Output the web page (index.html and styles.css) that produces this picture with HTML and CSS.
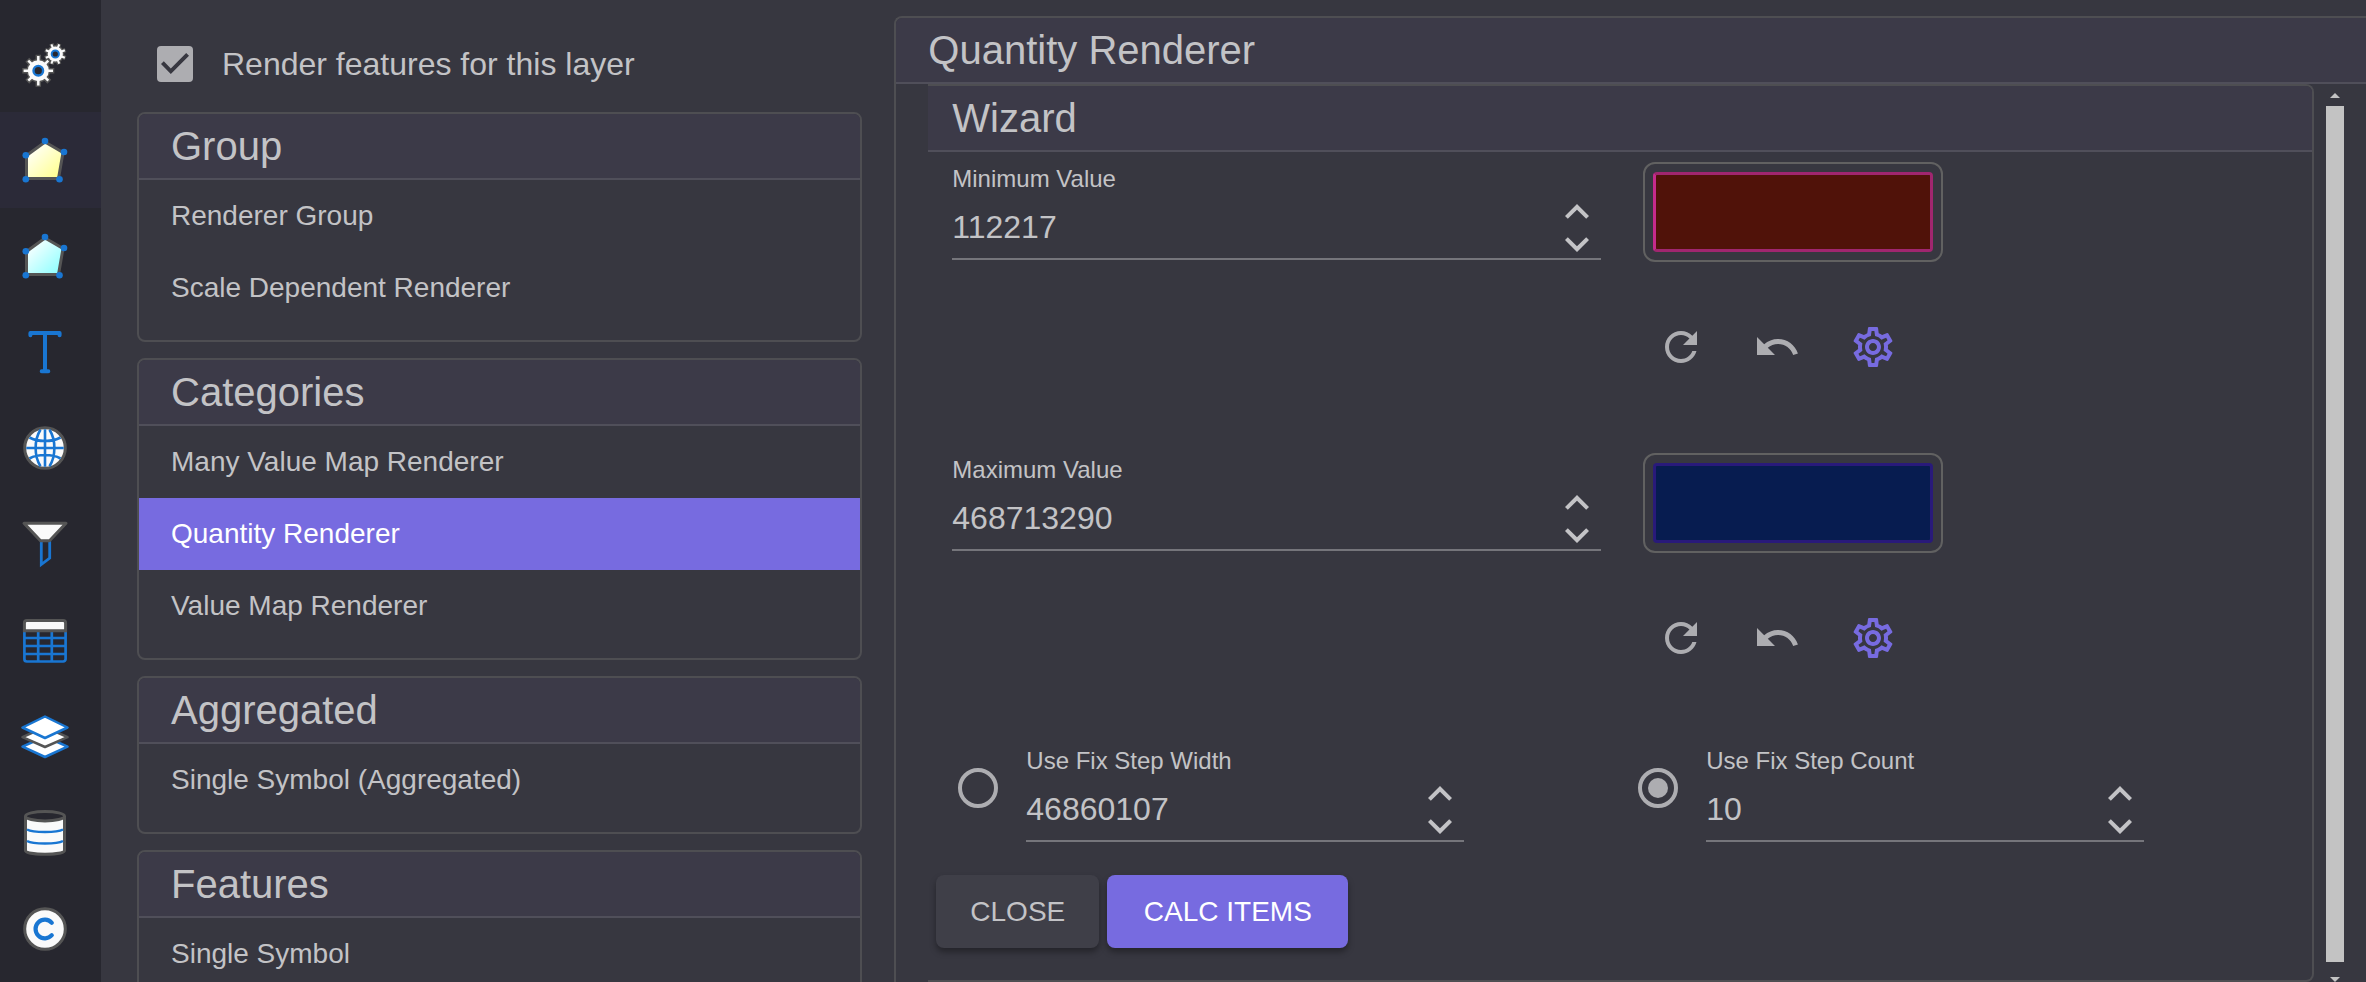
FILE: index.html
```html
<!DOCTYPE html>
<html lang="en">
<head>
<meta charset="utf-8">
<title>Layer rendering</title>
<link rel="stylesheet" href="styles.css">
</head>
<body>
<svg class="sprite" aria-hidden="true">
  <symbol id="i-up" viewBox="4 4 16 16"><path d="M7.41 15.41 12 10.83l4.59 4.58L18 14l-6-6-6 6z"/></symbol>
  <symbol id="i-down" viewBox="4 4 16 16"><path d="M7.41 8.59 12 13.17l4.59-4.58L18 10l-6 6-6-6z"/></symbol>
  <symbol id="i-refresh" viewBox="0 0 24 24"><path d="M17.65 6.35C16.2 4.9 14.21 4 12 4c-4.42 0-7.99 3.58-7.99 8s3.57 8 7.99 8c3.73 0 6.84-2.55 7.73-6h-2.08c-.82 2.33-3.04 4-5.65 4-3.31 0-6-2.69-6-6s2.69-6 6-6c1.66 0 3.14.69 4.22 1.78L13 11h7V4z"/></symbol>
  <symbol id="i-undo" viewBox="0 0 24 24"><path d="M12.5 8c-2.65 0-5.05.99-6.9 2.6L2 7v9h9l-3.62-3.62c1.39-1.16 3.16-1.88 5.12-1.88 3.54 0 6.55 2.31 7.6 5.5l2.37-.78C21.08 11.03 17.15 8 12.5 8z"/></symbol>
  <symbol id="i-gear" viewBox="0 0 24 24"><path d="M19.43 12.98c.04-.32.07-.64.07-.98 0-.34-.03-.66-.07-.98l2.11-1.65c.19-.15.24-.42.12-.64l-2-3.46c-.09-.16-.26-.25-.44-.25-.06 0-.12.01-.17.03l-2.49 1c-.52-.4-1.08-.73-1.69-.98l-.38-2.65C14.46 2.18 14.25 2 14 2h-4c-.25 0-.46.18-.49.42l-.38 2.65c-.61.25-1.17.59-1.69.98l-2.49-1c-.06-.02-.12-.03-.18-.03-.17 0-.34.09-.43.25l-2 3.46c-.13.22-.07.49.12.64l2.11 1.65c-.04.32-.07.65-.07.98 0 .33.03.66.07.98l-2.11 1.65c-.19.15-.24.42-.12.64l2 3.46c.09.16.26.25.44.25.06 0 .12-.01.17-.03l2.49-1c.52.4 1.08.73 1.69.98l.38 2.65c.03.24.24.42.49.42h4c.25 0 .46-.18.49-.42l.38-2.65c.61-.25 1.17-.59 1.69-.98l2.49 1c.06.02.12.03.18.03.17 0 .34-.09.43-.25l2-3.46c.12-.22.07-.49-.12-.64l-2.11-1.65zm-1.98-1.71c.04.31.05.52.05.73 0 .21-.02.43-.05.73l-.14 1.13.89.7 1.08.84-.7 1.21-1.27-.51-1.04-.42-.9.68c-.43.32-.84.56-1.25.73l-1.06.43-.16 1.13-.2 1.35h-1.4l-.19-1.35-.16-1.13-1.06-.43c-.43-.18-.83-.41-1.23-.71l-.91-.7-1.06.43-1.27.51-.7-1.21 1.08-.84.89-.7-.14-1.13c-.03-.31-.05-.54-.05-.74s.02-.43.05-.73l.14-1.13-.89-.7-1.08-.84.7-1.21 1.27.51 1.04.42.9-.68c.43-.32.84-.56 1.25-.73l1.06-.43.16-1.13.2-1.35h1.39l.19 1.35.16 1.13 1.06.43c.43.18.83.41 1.23.71l.91.7 1.06-.43 1.27-.51.7 1.21-1.07.85-.89.7.14 1.13zM12 8c-2.21 0-4 1.79-4 4s1.79 4 4 4 4-1.79 4-4-1.79-4-4-4zm0 6c-1.1 0-2-.9-2-2s.9-2 2-2 2 .9 2 2-.9 2-2 2z"/></symbol>
</svg>

<div class="app">
  <nav class="rail" aria-label="Layer properties">
    <button class="rail-item" aria-label="General">
      <svg viewBox="0 0 48 48">
        <g class="gear-edge"><path stroke-width="5.5" d="M17.3 14.7v32M1.3 30.7h32M6.3 19.7l22 22M28.3 19.7l-22 22"/><circle cx="17.3" cy="30.7" r="11.8"/><path stroke-width="4.5" d="M30.4 3.8l7.8 20.4M38.2 3.8l-7.8 20.4M24 10l20.6 8M24 18l20.6-8"/><circle cx="34.3" cy="14" r="9"/></g>
        <g class="gear-body"><path stroke-width="2.5" d="M17.3 16v29.4M2.6 30.7H32M7.3 20.7l20 20M27.3 20.7l-20 20"/><circle cx="17.3" cy="30.7" r="10.5"/><path stroke-width="2" d="M30.4 4.3l7.8 19.4M38.2 4.3l-7.8 19.4M24.8 10.2l19 7.6M24.8 17.8l19-7.6"/><circle cx="34.3" cy="14" r="7.6"/></g>
        <g class="hub"><circle cx="17.3" cy="30.7" r="4.8" stroke-width="2.4"/><circle cx="34.3" cy="14" r="3.6" stroke-width="2"/></g>
      </svg>
    </button>
    <button class="rail-item is-active" aria-label="Rendering">
      <svg viewBox="0 0 48 48">
        <defs><linearGradient id="warm" x1="0" y1="0" x2="1" y2="1"><stop offset=".1" stop-color="#fff"/><stop offset=".9" stop-color="#ffff91"/></linearGradient></defs>
        <path class="edge" fill="url(#warm)" d="M24 6l18 10.500-4.500 26H5.500V19.500z"/>
        <g class="dots"><circle cx="24" cy="5" r="3.300"/><circle cx="43" cy="16" r="3.300"/><circle cx="38.500" cy="43.300" r="3.300"/><circle cx="4.800" cy="43.300" r="3.300"/><circle cx="4.800" cy="19.200" r="3.300"/></g>
      </svg>
    </button>
    <button class="rail-item" aria-label="Selection rendering">
      <svg viewBox="0 0 48 48">
        <defs><linearGradient id="cool" x1="0" y1="0" x2="1" y2="1"><stop offset=".1" stop-color="#fff"/><stop offset=".9" stop-color="#91ffff"/></linearGradient></defs>
        <path class="edge" fill="url(#cool)" d="M24 6l18 10.500-4.500 26H5.500V19.500z"/>
        <g class="dots"><circle cx="24" cy="5" r="3.300"/><circle cx="43" cy="16" r="3.300"/><circle cx="38.500" cy="43.300" r="3.300"/><circle cx="4.800" cy="43.300" r="3.300"/><circle cx="4.800" cy="19.200" r="3.300"/></g>
      </svg>
    </button>
    <button class="rail-item" aria-label="Labels">
      <svg viewBox="0 0 48 48"><g class="blue-line" stroke-width="4" stroke-linecap="round" stroke-linejoin="round"><path d="M9.400 7.300V4.900h29.200v2.400M20.700 43.200h6.600M24 5v38"/></g></svg>
    </button>
    <button class="rail-item" aria-label="Spatial reference">
      <svg viewBox="0 0 48 48"><circle class="edge" fill="#fafafa" cx="24" cy="24" r="20.300"/><g class="blue-line" stroke-width="2.600"><path d="M24 5.300v37.400M5.300 24h37.400M8.500 13.500c8 4.600 23 4.600 31 0M8.500 34.500c8-4.600 23-4.600 31 0M19.500 5.800c-6.500 10-6.500 26.400 0 36.400M28.500 5.800c6.500 10 6.500 26.400 0 36.400"/></g></svg>
    </button>
    <button class="rail-item" aria-label="Filter">
      <svg viewBox="0 0 48 48"><path class="blue-line" stroke-width="2.800" d="M20.300 21v23.500l8.400-6.500V21"/><path class="edge" fill="#fafafa" stroke-linejoin="round" d="M3 3.300h42L28.500 20.700h-9z"/></svg>
    </button>
    <button class="rail-item" aria-label="Fields">
      <svg viewBox="0 0 48 48"><path class="blue-line" stroke-width="2.700" d="M3.400 15v28a2.500 2.500 0 0 0 2.500 2.500h36.200a2.500 2.500 0 0 0 2.500-2.500V15M3.400 22h41.200M3.400 30h41.200M3.400 38h41.200M17.200 15v30M30.800 15v30"/><path class="edge" fill="#fafafa" stroke-width="2.700" d="M3.400 14.700V7a2.500 2.500 0 0 1 2.500-2.500h36.200A2.500 2.500 0 0 1 44.600 7v7.700z"/></svg>
    </button>
    <button class="rail-item" aria-label="Layers">
      <svg viewBox="0 0 48 48"><g fill="#fff" stroke-width="2.500" stroke-linejoin="round"><path stroke="#1976d2" d="M24 24.500l22.500 10.200L24 45 1.500 34.700z"/><path stroke="#555" d="M24 15l22.500 10.200L24 35 1.500 25.200z"/><path stroke="#1976d2" d="M24 4.500l22.500 11L24 26 1.500 15.500z"/></g></svg>
    </button>
    <button class="rail-item" aria-label="Data source">
      <svg viewBox="0 0 48 48"><path class="edge" fill="#fafafa" d="M4.500 8v34.500c0 5 39 5 39 0V8"/><path class="blue-line" stroke-width="2.500" d="M6 21.500c6 3.300 30 3.300 36 0M6 33c6 3.300 30 3.300 36 0"/><ellipse class="edge" fill="#27272f" cx="24" cy="8.200" rx="19.500" ry="4.700"/></svg>
    </button>
    <button class="rail-item" aria-label="Copyright">
      <svg viewBox="0 0 48 48"><circle class="edge" fill="#fafafa" cx="24" cy="25" r="20.300"/><path class="blue-line" stroke-width="4.200" stroke-linecap="round" d="M30.800 18.800a9.300 9.300 0 1 0 0 12.400"/></svg>
    </button>
  </nav>

  <section class="list-column">
    <label class="render-toggle">
      <input class="checkbox" type="checkbox" checked>
      <span>Render features for this layer</span>
    </label>

    <section class="card">
      <h2 class="card-title">Group</h2>
      <ul class="list">
        <li><button class="list-item">Renderer Group</button></li>
        <li><button class="list-item">Scale Dependent Renderer</button></li>
      </ul>
    </section>
    <section class="card">
      <h2 class="card-title">Categories</h2>
      <ul class="list">
        <li><button class="list-item">Many Value Map Renderer</button></li>
        <li><button class="list-item is-selected" aria-current="true">Quantity Renderer</button></li>
        <li><button class="list-item">Value Map Renderer</button></li>
      </ul>
    </section>
    <section class="card">
      <h2 class="card-title">Aggregated</h2>
      <ul class="list">
        <li><button class="list-item">Single Symbol (Aggregated)</button></li>
      </ul>
    </section>
    <section class="card">
      <h2 class="card-title">Features</h2>
      <ul class="list">
        <li><button class="list-item">Single Symbol</button></li>
      </ul>
    </section>
  </section>

  <main class="detail">
    <h1 class="card-title">Quantity Renderer</h1>
    <div class="detail-body">
      <section class="wizard">
        <h2 class="card-title wizard-title">Wizard</h2>
        <form class="wizard-form">
          <div class="row range-row">
            <div class="field">
              <label for="min">Minimum Value</label>
              <div class="control">
                <input id="min" type="text" inputmode="numeric" value="112217">
                <div class="spin">
                  <button type="button" aria-label="Increase"><svg><use href="#i-up"/></svg></button>
                  <button type="button" aria-label="Decrease"><svg><use href="#i-down"/></svg></button>
                </div>
              </div>
            </div>
            <div class="symbol">
              <input class="swatch swatch-min" type="color" value="#501209" aria-label="Minimum colour">
              <div class="tools">
                <button type="button" aria-label="Refresh"><svg><use href="#i-refresh"/></svg></button>
                <button type="button" aria-label="Undo"><svg><use href="#i-undo"/></svg></button>
                <button type="button" class="accent" aria-label="Settings"><svg><use href="#i-gear"/></svg></button>
              </div>
            </div>
          </div>
          <div class="row range-row">
            <div class="field">
              <label for="max">Maximum Value</label>
              <div class="control">
                <input id="max" type="text" inputmode="numeric" value="468713290">
                <div class="spin">
                  <button type="button" aria-label="Increase"><svg><use href="#i-up"/></svg></button>
                  <button type="button" aria-label="Decrease"><svg><use href="#i-down"/></svg></button>
                </div>
              </div>
            </div>
            <div class="symbol">
              <input class="swatch swatch-max" type="color" value="#071c50" aria-label="Maximum colour">
              <div class="tools">
                <button type="button" aria-label="Refresh"><svg><use href="#i-refresh"/></svg></button>
                <button type="button" aria-label="Undo"><svg><use href="#i-undo"/></svg></button>
                <button type="button" class="accent" aria-label="Settings"><svg><use href="#i-gear"/></svg></button>
              </div>
            </div>
          </div>
          <div class="row step-row">
            <div class="step">
              <input class="radio" type="radio" name="step" aria-label="Use Fix Step Width">
              <div class="field">
                <label for="width">Use Fix Step Width</label>
                <div class="control">
                  <input id="width" type="text" inputmode="numeric" value="46860107">
                  <div class="spin">
                    <button type="button" aria-label="Increase"><svg><use href="#i-up"/></svg></button>
                    <button type="button" aria-label="Decrease"><svg><use href="#i-down"/></svg></button>
                  </div>
                </div>
              </div>
            </div>
            <div class="step">
              <input class="radio" type="radio" name="step" aria-label="Use Fix Step Count" checked>
              <div class="field">
                <label for="count">Use Fix Step Count</label>
                <div class="control">
                  <input id="count" type="text" inputmode="numeric" value="10">
                  <div class="spin">
                    <button type="button" aria-label="Increase"><svg><use href="#i-up"/></svg></button>
                    <button type="button" aria-label="Decrease"><svg><use href="#i-down"/></svg></button>
                  </div>
                </div>
              </div>
            </div>
          </div>
          <div class="actions">
            <button type="button" class="btn">CLOSE</button>
            <button type="button" class="btn btn-primary">CALC ITEMS</button>
          </div>
        </form>
      </section>
      <div class="scrollbar" aria-hidden="true">
        <span class="arrow arrow-up"></span>
        <span class="thumb"></span>
        <span class="arrow arrow-down"></span>
      </div>
    </div>
  </main>
</div>
</body>
</html>
```
FILE: styles.css
```css
:root {
  --surface: #373740;
  --rail: #27272f;
  --title: #3c3a48;
  --line: #4e4e52;
  --title-line: #504f5a;
  --text: #c3c3c6;
  --icon: #adadb1;
  --primary: #776be0;
  --blue: #1976d2;
}

* { box-sizing: border-box; }

body {
  margin: 0;
  background: var(--surface);
  color: var(--text);
  font-family: "Liberation Sans", Arial, sans-serif;
  font-size: 28px;
}

button, input { font: inherit; color: inherit; }
button { border: 0; padding: 0; background: none; cursor: pointer; }
h1, h2, ul { margin: 0; padding: 0; }
ul { list-style: none; }
svg { display: block; fill: currentColor; }
.sprite { position: absolute; width: 0; height: 0; }

.app { display: flex; height: 100vh; overflow: hidden; }

/* Icon rail */
.rail {
  flex: none;
  width: 101px;
  padding-top: 16px;
  background: var(--rail);
}
.rail-item { display: flex; width: 100%; padding: 24px 21px; }
.rail-item.is-active { background: #2b2a38; }
.rail-item svg { width: 48px; height: 48px; fill: none; }
.edge { stroke: #555; stroke-width: 3; }
.blue-line { fill: none; stroke: var(--blue); }
.dots { fill: var(--blue); }
.gear-edge { fill: #555; }
.gear-edge path { stroke: #555; }
.gear-body { fill: #fafafa; }
.gear-body path { stroke: #fafafa; }
.hub { fill: var(--rail); stroke: var(--blue); }

/* Renderer list */
.list-column {
  display: flex;
  flex: 38 1 0;
  flex-direction: column;
  gap: 16px;
  min-width: 0;
  margin: 0 32px 0 36px;
}
.list-column > * { flex: none; }
.render-toggle {
  display: flex;
  align-items: center;
  gap: 29px;
  padding: 40px 0 8px 20px;
  font-size: 32px;
  line-height: 48px;
}
.checkbox {
  display: grid;
  place-content: center;
  appearance: none;
  width: 36px;
  height: 36px;
  margin: 0;
  border-radius: 4px;
  background: var(--icon);
}
.checkbox:checked::before {
  content: "";
  width: 28px;
  height: 22px;
  background: var(--surface);
  clip-path: polygon(0 50%, 10% 37%, 35% 70%, 90% 0, 100% 13%, 35% 96%);
}
.card {
  overflow: hidden;
  border: 2px solid var(--line);
  border-radius: 8px;
}
.card-title {
  padding: 8px 32px;
  border-bottom: 2px solid var(--title-line);
  background: var(--title);
  font-size: 40px;
  font-weight: 400;
  line-height: 48px;
}
.list { padding-bottom: 16px; }
.list-item {
  display: block;
  width: 100%;
  padding: 16px 32px;
  line-height: 40px;
  text-align: left;
}
.list-item.is-selected { background: var(--primary); color: #fff; }

/* Renderer settings */
.detail {
  display: flex;
  flex: 77 1 0;
  flex-direction: column;
  min-width: 0;
  margin-top: 16px;
  border: solid var(--line);
  border-width: 2px 0 0 2px;
  border-radius: 8px 0 0 0;
  overflow: hidden;
}
.detail-body { display: flex; flex: 1; min-height: 0; padding-left: 32px; }
.wizard {
  flex: 1;
  align-self: flex-start;
  min-width: 0;
  border: solid var(--line);
  border-width: 2px 2px 2px 0;
  border-radius: 0 8px 8px 0;
  overflow: hidden;
}
.wizard-title { padding-left: 24px; }
.wizard-form { padding: 0 16px 32px 8px; }
.row { display: grid; grid-template-columns: 1fr 1fr; }
.range-row { height: 291px; padding-left: 16px; column-gap: 42px; grid-template-columns: 648fr 653fr; }
.field { min-width: 0; padding-top: 14px; }
.field label { display: block; font-size: 24px; line-height: 26px; }
.control { position: relative; }
.control input {
  display: block;
  width: 100%;
  height: 68px;
  padding: 4px 56px 0 0;
  border: 0;
  border-bottom: 2px solid #75757b;
  outline: 0;
  background: none;
  font-size: 32px;
}
.spin { position: absolute; top: 4px; right: 8px; }
.spin button { display: block; }
.spin svg { width: 32px; height: 32px; }
.symbol { padding-top: 10px; }
.swatch {
  display: block;
  appearance: none;
  width: 300px;
  height: 100px;
  padding: 8px;
  border: 2px solid #616161;
  border-radius: 12px;
  background: none;
}
.swatch::-webkit-color-swatch-wrapper { padding: 0; }
.swatch::-webkit-color-swatch { border: 3px solid; border-radius: 4px; }
.swatch-min::-webkit-color-swatch { border-color: #a0266f #a0266f #a0266f #c62b8b; }
.swatch-max::-webkit-color-swatch { border-color: #291a7a; }
.tools { display: flex; gap: 48px; padding: 61px 14px 0; color: var(--icon); }
.tools svg { width: 48px; height: 48px; }
.tools .accent { color: var(--primary); }

.step-row { height: 141px; }
.step { display: flex; align-items: flex-start; gap: 28px; padding: 0 152px 0 22px; }
.step .field { flex: 1; }
.radio {
  display: grid;
  flex: none;
  place-content: center;
  appearance: none;
  width: 40px;
  height: 40px;
  margin: 34px 0 0;
  border: 4px solid var(--icon);
  border-radius: 50%;
}
.radio:checked::before {
  content: "";
  width: 20px;
  height: 20px;
  border-radius: 50%;
  background: var(--icon);
}

.actions { display: flex; gap: 8px; }
.btn {
  min-width: 163px;
  height: 73px;
  padding: 0 32px;
  border-radius: 8px;
  background: #3f3f48;
  box-shadow: 0 4px 6px rgba(0, 0, 0, .35);
}
.btn-primary { min-width: 241px; background: var(--primary); color: #fff; }

.scrollbar {
  display: flex;
  flex: none;
  flex-direction: column;
  align-items: center;
  gap: 8px;
  width: 18px;
  margin: 9px 22px 0 12px;
}
.arrow { width: 10px; height: 5px; background: #c3c3c3; }
.arrow-up { clip-path: polygon(50% 0, 100% 100%, 0 100%); }
.arrow-down { margin-top: 7px; clip-path: polygon(0 0, 100% 0, 50% 100%); }
.thumb { flex: 1; width: 100%; background: #c3c3c3; }
```
